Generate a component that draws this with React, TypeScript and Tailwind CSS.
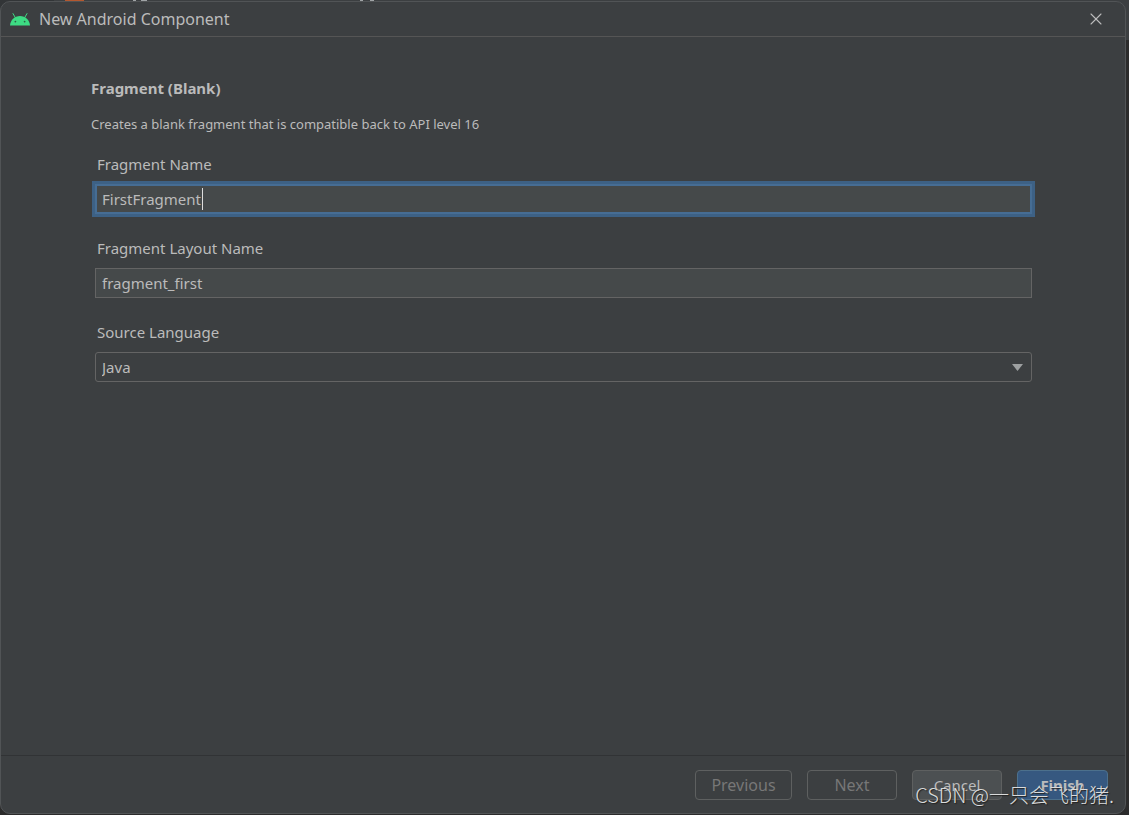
import { useState } from "react";
import { X } from "lucide-react";

const fieldClass =
  "block h-[30px] w-full appearance-none text-[15px] text-[#bbbbbb] outline-none";

const labelClass = "block h-8 pl-0.5 text-[15px] leading-6";

const buttonClass = "h-[30px] rounded-[4px] border leading-none";

function AndroidIcon() {
  return (
    <svg viewBox="0 0 20 13" className="h-[13px] w-5" aria-hidden="true">
      <path
        d="M3 .6 5.2 4.4M17 .6 14.8 4.4"
        stroke="#3ddc84"
        strokeWidth="1"
        strokeLinecap="round"
      />
      <path d="M0 12.6C.4 7 4.6 3 10 3s9.6 4 10 9.6z" fill="#3ddc84" />
      <circle cx="5.4" cy="8.6" r="0.9" fill="#2f5f47" />
      <circle cx="14.6" cy="8.6" r="0.9" fill="#2f5f47" />
    </svg>
  );
}

// Slivers of the editor that stay visible around the dialog.
function Backdrop() {
  return (
    <div aria-hidden="true" className="absolute inset-0 bg-[#2b2b2b]">
      <div className="flex h-10 items-start bg-[#3c3f41]">
        <div className="h-2 w-[54px] bg-[#323537]" />
        <div className="ml-[11px] h-px w-[19px] bg-[#b4582f]" />
        <div className="ml-[49px] h-px w-[3px] bg-[#a0a4a6]" />
        <div className="ml-[5px] h-px w-[6px] bg-[#a0a4a6]" />
        <div className="ml-[213px] h-px w-[3px] bg-[#a0a4a6]" />
        <div className="ml-[7px] h-px w-[4px] bg-[#a0a4a6]" />
      </div>
    </div>
  );
}

export default function App() {
  const [name, setName] = useState("FirstFragment");
  const [layout, setLayout] = useState("fragment_first");
  const [language, setLanguage] = useState("Java");

  return (
    <div className="relative flex min-h-screen pt-px pr-[3px] pb-px font-['Noto_Sans','Noto_Sans_CJK_SC',sans-serif] text-[#bbbbbb]">
      <Backdrop />
      <div
        role="dialog"
        aria-labelledby="dialog-title"
        className="relative flex flex-1 flex-col overflow-hidden rounded-[10px] border border-[#515456] bg-[#3c3f41]"
      >
        <header className="flex h-[35px] items-center border-b border-[#555555] pr-[21px] pl-[9px]">
          <AndroidIcon />
          <h1 id="dialog-title" className="ml-[9px] flex-1 text-base">
            New Android Component
          </h1>
          <button type="button" aria-label="Close" className="text-[#bbbbbb]">
            <X className="size-4 scale-125" strokeWidth={1.3} />
          </button>
        </header>

        <main className="flex-1 pt-[39px] pr-[93px] pl-[90px]">
          <h2 className="text-[15px] leading-6 font-bold">Fragment (Blank)</h2>
          <p className="mt-3 text-[13px] leading-6">
            Creates a blank fragment that is compatible back to API level 16
          </p>

          <form className="mt-4 flex flex-col gap-[22px] pl-1">
            <div>
              <label htmlFor="fragment-name" className={labelClass}>
                Fragment Name
              </label>
              <div className="relative">
                <input
                  id="fragment-name"
                  value={name}
                  onChange={(e) => setName(e.target.value)}
                  className={`${fieldClass} border-2 border-[#466d94] bg-[#45494a] px-[5px] ring-3 ring-[#3d6185]`}
                />
                <span
                  aria-hidden="true"
                  className="absolute top-1 left-[107px] h-[22px] w-px bg-[#dddddd]"
                />
              </div>
            </div>
            <div>
              <label htmlFor="layout-name" className={labelClass}>
                Fragment Layout Name
              </label>
              <input
                id="layout-name"
                value={layout}
                onChange={(e) => setLayout(e.target.value)}
                className={`${fieldClass} border border-[#646464] bg-[#45494a] px-1.5`}
              />
            </div>
            <div>
              <label htmlFor="language" className={labelClass}>
                Source Language
              </label>
              <div className="relative">
                <select
                  id="language"
                  value={language}
                  onChange={(e) => setLanguage(e.target.value)}
                  className={`${fieldClass} rounded-[3px] border border-[#646464] bg-[#3c3f41] px-1.5`}
                >
                  <option>Java</option>
                  <option>Kotlin</option>
                </select>
                <svg
                  viewBox="0 0 11 7"
                  aria-hidden="true"
                  className="pointer-events-none absolute top-3 right-[9px] h-[7px] w-[11px]"
                >
                  <path d="M0 0h11L5.5 7z" fill="#9da0a1" />
                </svg>
              </div>
            </div>
          </form>
        </main>

        <footer className="flex h-[58px] justify-end gap-[15px] border-t border-[#313335] pt-3.5 pr-[17px]">
          <button
            type="button"
            disabled
            className={`${buttonClass} w-[97px] border-[#5e6060] text-base text-[#777777]`}
          >
            Previous
          </button>
          <button
            type="button"
            disabled
            className={`${buttonClass} w-[90px] border-[#5e6060] text-base text-[#777777]`}
          >
            Next
          </button>
          <button
            type="button"
            className={`${buttonClass} w-[90px] border-[#5e6060] bg-[#4c5052] text-[15px]`}
          >
            Cancel
          </button>
          <button
            type="button"
            className={`${buttonClass} w-[91px] border-[#4c708c] bg-[#365880] text-[15px] font-bold`}
          >
            Finish
          </button>
        </footer>
      </div>

      <span className="pointer-events-none absolute right-[15px] bottom-1.5 font-['Noto_Sans_CJK_SC',sans-serif] text-[20px] leading-7 font-light whitespace-nowrap text-[#dadbdb] [text-shadow:1px_1px_1px_#222222]">
        CSDN @一只会飞的猪.
      </span>
    </div>
  );
}
